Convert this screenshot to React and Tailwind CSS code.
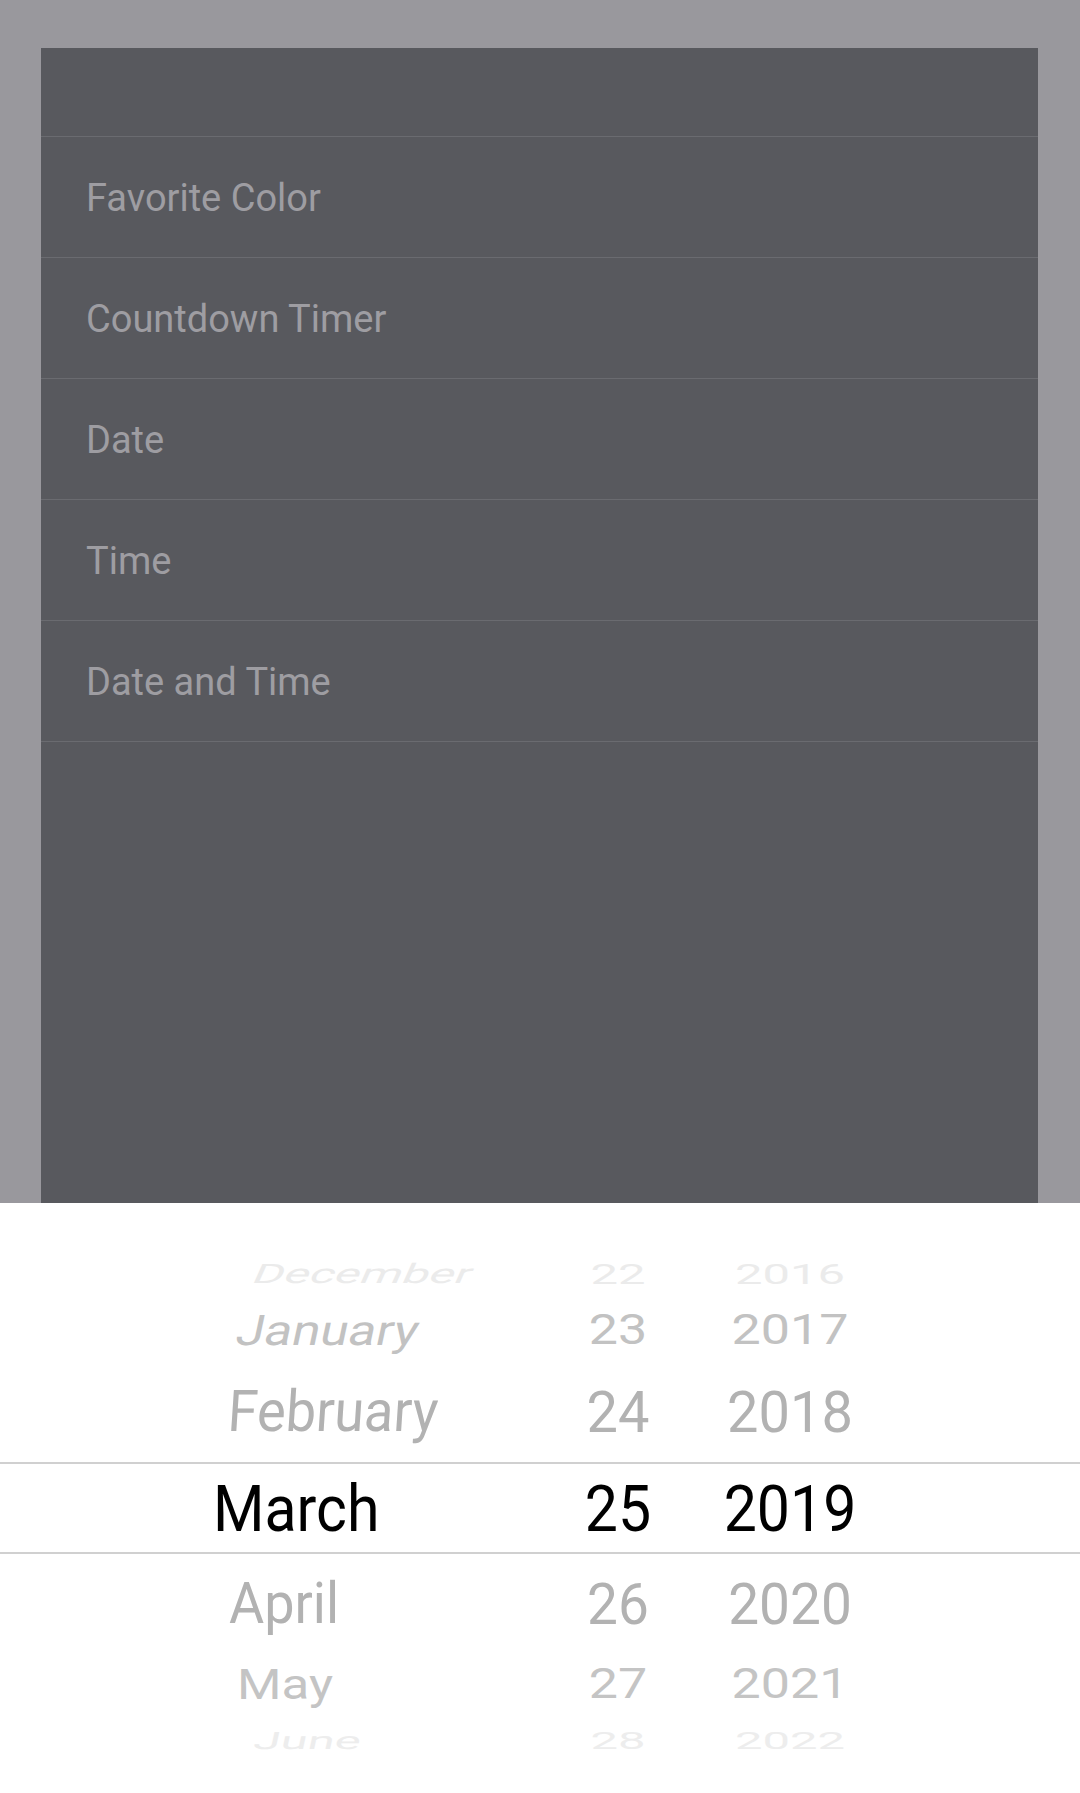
import React from 'react';

// --- Settings list ---
const items = ['Favorite Color', 'Countdown Timer', 'Date', 'Time', 'Date and Time'];

// --- Wheel rows (perspective faked with scaleY / skew) ---
const wheel = [
  { m: 'December', d: '22', y: '2016', row: 'h-[48px]', pl: 'pl-[254px]', color: 'text-[#ebebeb]', mText: 'text-[48px] [transform:scaleY(0.56)_skewX(-14deg)]', nText: 'text-[49px] [transform:scaleY(0.56)]' },
  { m: 'January', d: '23', y: '2017', row: 'h-[64px]', pl: 'pl-[237px]', color: 'text-[#c2c2c2]', mText: 'text-[51px] [transform:scaleY(0.83)_skewX(-10deg)]', nText: 'text-[52px] [transform:scaleY(0.82)]' },
  { m: 'February', d: '24', y: '2018', row: 'h-[100px]', pl: 'pl-[228px]', color: 'text-[#b2b2b2]', mText: 'text-[54px] [transform:scaleY(1.07)_skewX(-4deg)]', nText: 'text-[56px] [transform:scaleY(1.04)]' },
  { m: 'March', d: '25', y: '2019', row: 'h-[92px] border-y-2 border-[#d0d0d0]', pl: 'pl-[213px]', color: 'text-black', mText: 'text-[59px] [transform:scaleY(1.1)]', nText: 'text-[59px] [transform:scaleY(1.1)]' },
  { m: 'April', d: '26', y: '2020', row: 'h-[100px]', pl: 'pl-[229px]', color: 'text-[#b2b2b2]', mText: 'text-[54px] [transform:scaleY(1.05)]', nText: 'text-[55px] [transform:scaleY(1.03)]' },
  { m: 'May', d: '27', y: '2021', row: 'h-[60px]', pl: 'pl-[237px]', color: 'text-[#c4c4c4]', mText: 'text-[51px] [transform:scaleY(0.83)]', nText: 'text-[52px] [transform:scaleY(0.82)]' },
  { m: 'June', d: '28', y: '2022', row: 'h-[52px]', pl: 'pl-[254px]', color: 'text-[#ededed]', mText: 'text-[49px] [transform:scaleY(0.49)_skewX(-6deg)]', nText: 'text-[49px] [transform:scaleY(0.49)]' },
];

const App = () => {
  return (
    <div className="h-[1793px] w-[1080px] flex flex-col bg-[#99989d] font-['Roboto',sans-serif] overflow-hidden">
      {/* Background list card */}
      <div className="flex-1 pt-[48px] pl-[41px] pr-[42px] flex">
        <div className="flex-1 bg-[#58595e] flex flex-col">
          <div className="h-[89px] border-b border-[#6a6b70] shrink-0" />
          {items.map((label) => (
            <div key={label} className="h-[121px] shrink-0 border-b border-[#6a6b70] flex items-center pl-[45px] pt-[2px]">
              <span className="text-[38px] leading-none text-[#9e9da2]">{label}</span>
            </div>
          ))}
        </div>
      </div>

      {/* Date picker sheet */}
      <div className="h-[590px] shrink-0 bg-white pt-[47px] flex flex-col">
        {wheel.map((r) => (
          <div key={r.m} className={`flex items-center shrink-0 ${r.row} ${r.color}`}>
            <div className={`w-[560px] ${r.pl}`}>
              <span className={`inline-block leading-none ${r.mText}`}>{r.m}</span>
            </div>
            <div className="w-[116px] text-center">
              <span className={`inline-block leading-none ${r.nText}`}>{r.d}</span>
            </div>
            <div className="w-[228px] text-center">
              <span className={`inline-block leading-none ${r.nText}`}>{r.y}</span>
            </div>
          </div>
        ))}
      </div>
    </div>
  );
};

export default App;
